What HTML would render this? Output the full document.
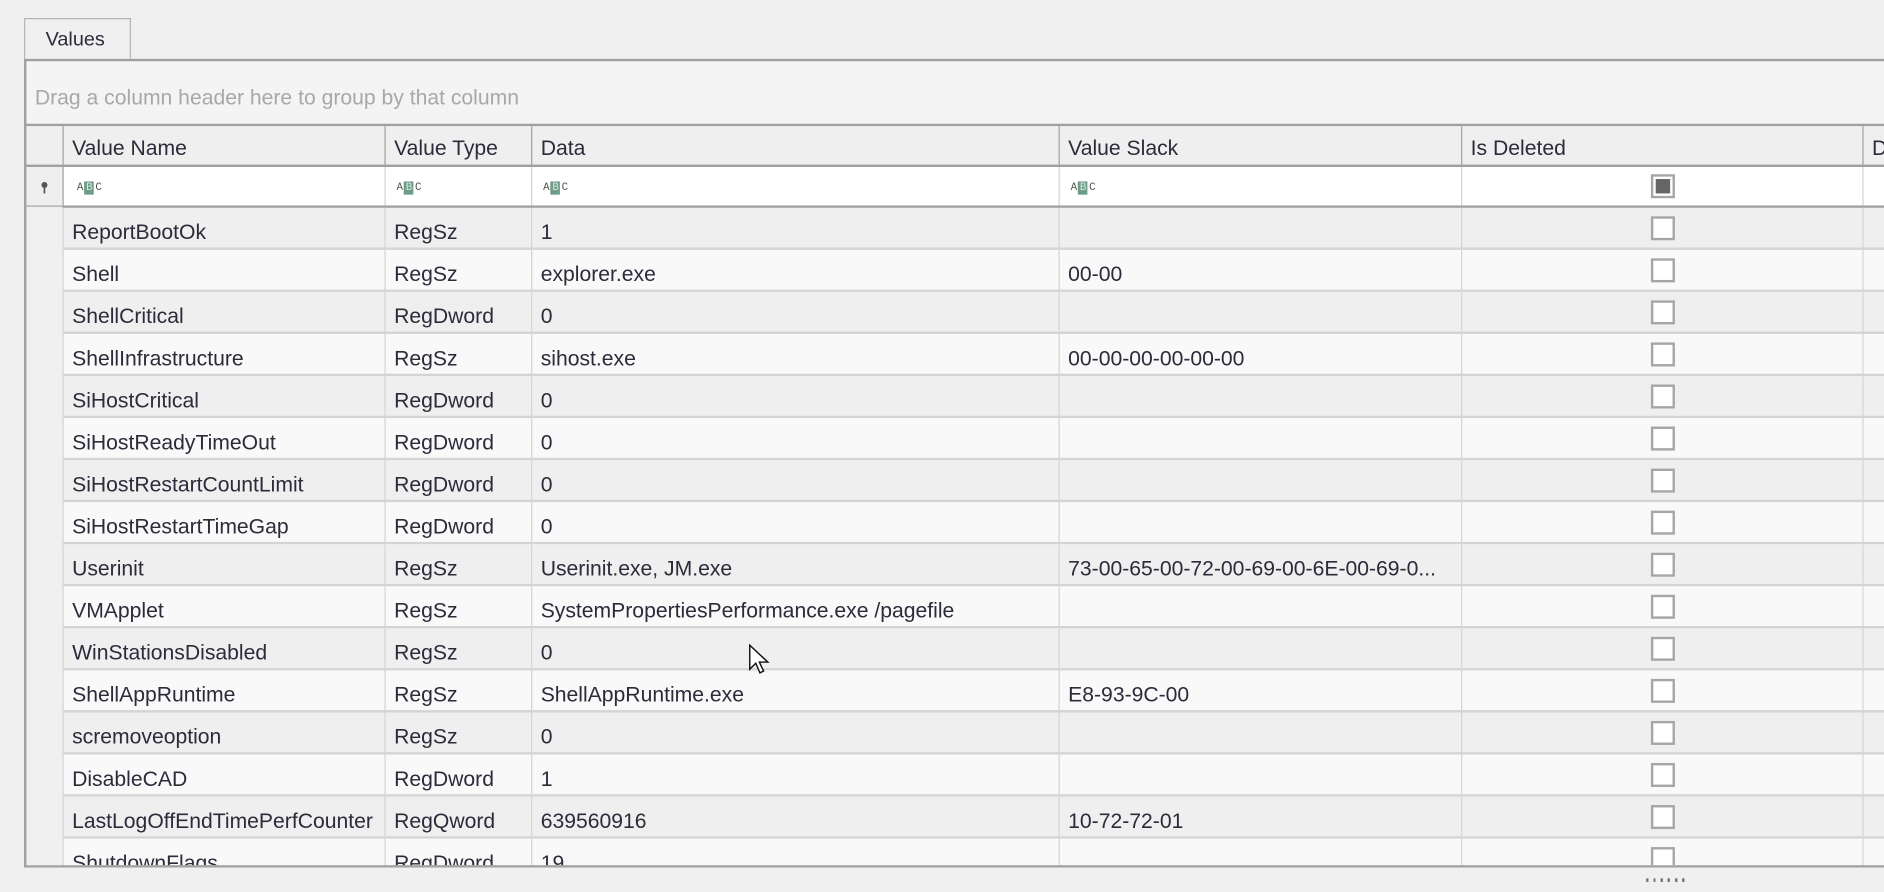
<!DOCTYPE html>
<html><head><meta charset="utf-8"><style>
html,body{margin:0;padding:0;width:1884px;height:892px;overflow:hidden;background:#f0f0f0}
#s{position:absolute;left:0;top:0;width:1568px;height:742px;transform:scale(1.20153);transform-origin:0 0;font-family:"Liberation Sans",sans-serif;font-size:17.6px;color:#2b2b3a}
.a{position:absolute;box-sizing:border-box}
.t{position:absolute;white-space:nowrap;line-height:34px;top:3px}
.vl{position:absolute;top:0;bottom:0;width:1px;background:#d4d4d4}
.cb{position:absolute;left:1374px;top:7px;width:20px;height:20px;border:2px solid #a6a6a6;background:#fff;box-sizing:border-box}
.abc{position:absolute;top:12px;font-size:9px;line-height:11px;font-family:"Liberation Mono",monospace;color:#555}
.abc b{display:inline-block;background:#6e9c89;color:#d8e8e0;width:8px;text-align:center;font-weight:normal;margin:0 1px}
</style></head><body><div id="s">
<div class="a" style="left:20px;top:15px;width:89px;height:36px;border:1px solid #b4b4b4;border-bottom:none;background:#f0f0f0"><span class="t" style="left:17px;line-height:32px;top:1px;font-size:16.5px">Values</span></div>
<div class="a" style="left:20px;top:49px;width:1560px;height:673px;border:2px solid #a0a0a0;border-right:none;background:#f0f0f0;overflow:hidden">
 <div class="a" style="left:0;top:0;width:1560px;height:54px;background:#f4f4f4;border-bottom:2px solid #a0a0a0"><span class="t" style="left:7px;line-height:56px;top:2px;color:#a8a8a8">Drag a column header here to group by that column</span></div>
 <div class="a" style="left:0;top:54px;width:1560px;height:34px;background:#efefef;border-bottom:2px solid #a0a0a0">
  <div class="vl" style="left:30px;background:#a0a0a0"></div><div class="vl" style="left:298px;background:#a0a0a0"></div><div class="vl" style="left:420px;background:#a0a0a0"></div><div class="vl" style="left:859px;background:#a0a0a0"></div><div class="vl" style="left:1194px;background:#a0a0a0"></div><div class="vl" style="left:1528px;background:#a0a0a0"></div>
  <span class="t" style="left:38px;top:1px">Value Name</span><span class="t" style="left:306px;top:1px">Value Type</span><span class="t" style="left:428px;top:1px">Data</span><span class="t" style="left:867px;top:1px">Value Slack</span><span class="t" style="left:1202px;top:1px">Is Deleted</span><span class="t" style="left:1536px;top:1px">D</span>
 </div>
 <div class="a" style="left:0;top:88px;width:1560px;height:34px;background:#fff;border-bottom:2px solid #a0a0a0">
  <div class="a" style="left:0;top:0;width:30px;height:32px;background:#efefef"></div>
  <svg class="a" style="left:11px;top:12px" width="8" height="11"><circle cx="4" cy="3" r="2.5" fill="#555"/><rect x="3.3" y="4" width="1.4" height="6" fill="#555"/></svg>
  <div class="vl" style="left:30px;background:#a0a0a0"></div><div class="vl" style="left:298px"></div><div class="vl" style="left:420px"></div><div class="vl" style="left:859px"></div><div class="vl" style="left:1194px"></div><div class="vl" style="left:1528px"></div>
  <span class="abc" style="left:42px">A<b>B</b>C</span><span class="abc" style="left:308px">A<b>B</b>C</span><span class="abc" style="left:430px">A<b>B</b>C</span><span class="abc" style="left:869px">A<b>B</b>C</span>
  <div class="cb" style="left:1352px;top:6px"><div style="position:absolute;left:2px;top:2px;width:12px;height:12px;background:#666"></div></div>
 </div>
 <div id="rows" class="a" style="left:0;top:122px;width:1560px;height:560px"></div>
</div>
<div class="a" style="left:1370px;top:731px;width:32px;height:3px;background:repeating-linear-gradient(90deg,#777 0 2px,transparent 2px 6px)"></div>
<svg class="a" style="left:623px;top:536px" width="20" height="30" viewBox="0 0 20 30"><path d="M1 1 L1 21 L6 16 L9.5 24 L12.5 22.5 L9 15 L16 15 Z" fill="#fff" stroke="#111" stroke-width="1.2"/></svg>
</div>
<script>
var d=[["ReportBootOk","RegSz","1",""],["Shell","RegSz","explorer.exe","00-00"],["ShellCritical","RegDword","0",""],["ShellInfrastructure","RegSz","sihost.exe","00-00-00-00-00-00"],["SiHostCritical","RegDword","0",""],["SiHostReadyTimeOut","RegDword","0",""],["SiHostRestartCountLimit","RegDword","0",""],["SiHostRestartTimeGap","RegDword","0",""],["Userinit","RegSz","Userinit.exe, JM.exe","73-00-65-00-72-00-69-00-6E-00-69-0..."],["VMApplet","RegSz","SystemPropertiesPerformance.exe /pagefile",""],["WinStationsDisabled","RegSz","0",""],["ShellAppRuntime","RegSz","ShellAppRuntime.exe","E8-93-9C-00"],["scremoveoption","RegSz","0",""],["DisableCAD","RegDword","1",""],["LastLogOffEndTimePerfCounter","RegQword","639560916","10-72-72-01"],["ShutdownFlags","RegDword","19",""]];
var h="";d.forEach(function(r,i){h+='<div class="a" style="left:0;top:'+(i*35)+'px;width:1560px;height:35px;background:'+(i%2?'#f9f9f9':'#efefef')+';border-bottom:2px solid #d4d4d4"><div class="a" style="left:0;top:-1px;width:30px;height:37px;background:#f0f0f0"></div><div class="vl" style="left:30px;background:#d4d4d4"></div><div class="vl" style="left:298px"></div><div class="vl" style="left:420px"></div><div class="vl" style="left:859px"></div><div class="vl" style="left:1194px"></div><div class="vl" style="left:1528px"></div><span class="t" style="left:38px">'+r[0]+'</span><span class="t" style="left:306px">'+r[1]+'</span><span class="t" style="left:428px">'+r[2]+'</span><span class="t" style="left:867px">'+r[3]+'</span><div class="cb" style="left:1352px"></div></div>';});
document.getElementById("rows").innerHTML=h;
</script>
</body></html>
